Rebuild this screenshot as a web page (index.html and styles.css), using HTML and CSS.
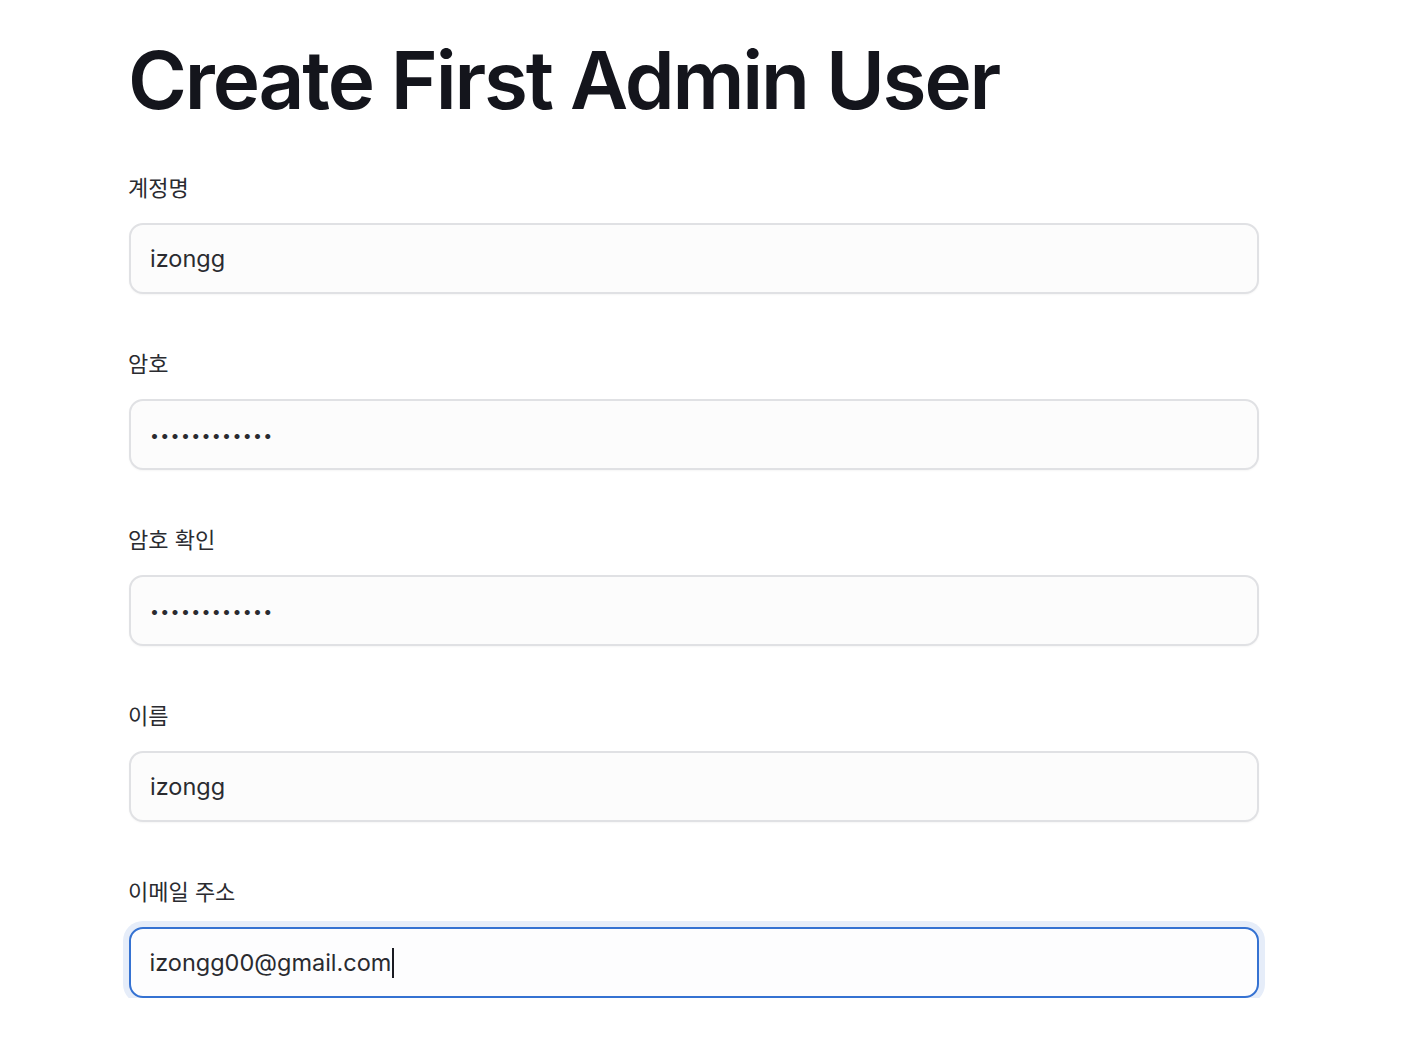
FILE: index.html
```html
<!DOCTYPE html>
<html lang="ko">
<head>
<meta charset="utf-8">
<title>Create First Admin User</title>
<link rel="stylesheet" href="styles.css">
</head>
<body>
<main class="page">
  <h1 class="title">Create First Admin User</h1>
  <form class="form">
    <div class="field">
      <label class="label" for="username">계정명</label>
      <input class="input" id="username" type="text" value="izongg">
    </div>
    <div class="field">
      <label class="label" for="pw">암호</label>
      <input class="input input--pw" id="pw" type="password" value="izongg123456">
    </div>
    <div class="field">
      <label class="label" for="pw2">암호 확인</label>
      <input class="input input--pw" id="pw2" type="password" value="izongg123456">
    </div>
    <div class="field">
      <label class="label" for="name">이름</label>
      <input class="input" id="name" type="text" value="izongg">
    </div>
    <div class="field">
      <label class="label" for="email">이메일 주소</label>
      <div class="input input--focus"><span>izongg00@gmail.com</span><span class="caret"></span></div>
    </div>
  </form>
</main>
</body>
</html>
```
FILE: styles.css
```css
html, body {
  margin: 0;
  padding: 0;
  background: #ffffff;
}
body {
  font-family: Inter, "Noto Sans", "Noto Sans CJK KR", sans-serif;
  color: #1a1b22;
}
.page {
  padding: 30px 0 0 128px;
  width: 1132px;
}
.title {
  margin: 0 0 0 0;
  font-size: 80px;
  font-weight: 600;
  line-height: 100px;
  letter-spacing: -0.027em;
  color: #14151c;
}
.form {
  display: flex;
  flex-direction: column;
  gap: 53px;
  margin-top: 41px;
}
.field {
  display: flex;
  flex-direction: column;
}
.label {
  font-family: "Noto Sans CJK KR", sans-serif;
  font-size: 22px;
  line-height: 30px;
  color: #2a2b30;
  margin-bottom: 22px;
}
.input {
  box-sizing: border-box;
  height: 71px;
  width: 1130px;
  margin-left: 1px;
  border: 2px solid #e0e1e4;
  border-radius: 14px;
  background: #fcfcfc;
  box-shadow: 0 1px 2px rgba(0, 0, 0, 0.04);
  padding: 0 19px;
  font-family: Inter, "Noto Sans", sans-serif;
  font-size: 23.5px;
  color: #2a2b30;
  outline: none;
  display: flex;
  align-items: center;
}
.input--pw {
  font-size: 16px;
  letter-spacing: 1.3px;
}
.input--focus {
  border: 2.5px solid #3572d2;
  padding-left: 18.5px;
  background: #fdfdfe;
  box-shadow: 0 0 0 6px #e6edf9;
}
.caret {
  display: inline-block;
  width: 2px;
  height: 30px;
  background: #1a1b22;
  margin-left: 1px;
}
```
